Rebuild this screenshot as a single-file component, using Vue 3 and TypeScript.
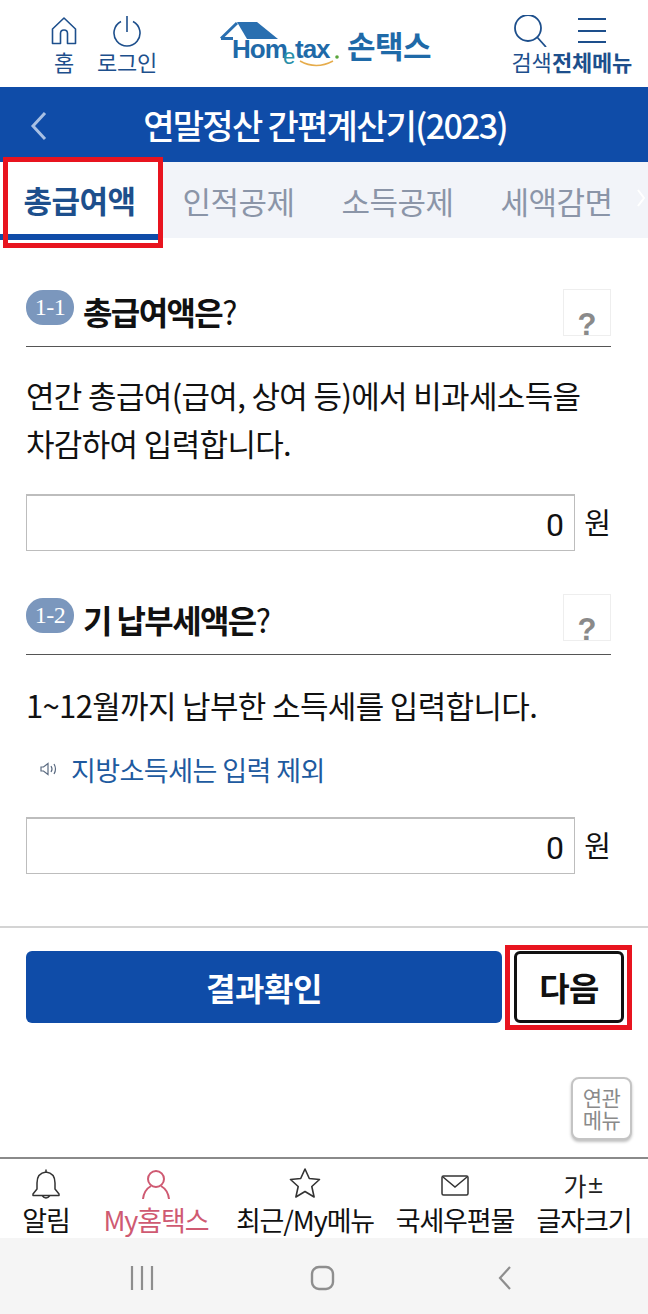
<script setup lang="ts">
interface NavItem {
  label: string;
  icon: string;
  active?: boolean;
}

const tabs = ['총급여액', '인적공제', '소득공제', '세액감면'];

const navItems: NavItem[] = [
  { label: '알림', icon: 'bell' },
  { label: 'My홈택스', icon: 'user', active: true },
  { label: '최근/My메뉴', icon: 'star' },
  { label: '국세우편물', icon: 'mail' },
  { label: '글자크기', icon: 'font' },
];
</script>

<template>
  <div class="page">
    <header class="top">
      <div class="top-group">
        <div class="top-btn home">
          <svg width="26" height="30" viewBox="0 0 26 30" fill="none" stroke="#1d4f8c" stroke-width="1.6">
            <path d="M1.500 13 13 2l11.500 11v14.500H16.500V17.500q0-3.500-3.500-3.500t-3.500 3.500V27.500H1.500z" stroke-linejoin="round" />
          </svg>
          <span>홈</span>
        </div>
        <div class="top-btn login">
          <svg width="28" height="30" viewBox="0 0 28 30" fill="none" stroke="#1d4f8c" stroke-width="1.6">
            <path d="M8 5.500a13 13 0 1 0 12 0" />
            <path d="M14 0v16" />
          </svg>
          <span>로그인</span>
        </div>
      </div>
      <div class="logo">
        <svg class="logo-mark" width="122" height="50" viewBox="0 0 122 50">
          <path d="M17 2h20l21 17H27z" fill="#2a6fb0" />
          <path d="M1 18.500 17 3M1 18.500h12" fill="none" stroke="#2a6fb0" stroke-width="3" />
          <text x="12" y="38" class="logo-word">Hom</text>
          <text x="63" y="44" class="logo-e">e</text>
          <text x="75" y="38" class="logo-word">tax</text>
          <circle cx="117" cy="37" r="1.800" fill="#5aa53c" />
          <path d="M80 41q16 9 33 0" fill="none" stroke="#e6ac4b" stroke-width="1.500" />
        </svg>
        <span class="logo-name">손택스</span>
      </div>
      <div class="top-group right">
        <div class="top-btn search">
          <svg width="36" height="32" viewBox="0 0 36 32" fill="none" stroke="#1d4f8c" stroke-width="1.800">
            <circle cx="14" cy="13" r="13" />
            <path d="M23 22l9 10" />
          </svg>
          <span>검색</span>
        </div>
        <div class="top-btn menu">
          <svg width="30" height="32" viewBox="0 0 30 32" fill="none" stroke="#1d4f8c" stroke-width="2">
            <path d="M1 4h28M1 16h28M1 27h28" />
          </svg>
          <span>전체메뉴</span>
        </div>
      </div>
    </header>

    <div class="title-bar">
      <svg class="back" width="18" height="30" viewBox="0 0 18 30" fill="none" stroke="#a8c0e4" stroke-width="3">
        <path d="M15 2 3 15l12 13" />
      </svg>
      <h1>연말정산 간편계산기(2023)</h1>
    </div>

    <nav class="tabs">
      <div v-for="(tab, i) in tabs" :key="tab" class="tab" :class="{ on: i === 0 }">{{ tab }}</div>
      <svg class="tab-more" width="10" height="20" viewBox="0 0 10 20" fill="none" stroke="#fff" stroke-width="2">
        <path d="M2 2l6 8-6 8" />
      </svg>
      <div class="mark mark-tab"></div>
    </nav>

    <main class="content">
      <section class="sec first">
        <div class="sec-head">
          <span class="badge">1-1</span>
          <h2>총급여액은<i>?</i></h2>
          <span class="help">?</span>
        </div>
        <p class="desc two">연간 총급여(급여, 상여 등)에서 비과세소득을<br />차감하여 입력합니다.</p>
        <div class="field">
          <div class="input">0</div>
          <span class="unit">원</span>
        </div>
      </section>

      <section class="sec second">
        <div class="sec-head">
          <span class="badge">1-2</span>
          <h2>기 납부세액은<i>?</i></h2>
          <span class="help">?</span>
        </div>
        <p class="desc one">1~12월까지 납부한 소득세를 입력합니다.</p>
        <p class="note">
          <svg width="20" height="16" viewBox="0 0 20 16" fill="none" stroke="#5a6a80" stroke-width="1.200">
            <path d="M1 6h2.500L8 2.500v11L3.500 10H1z" />
            <path d="M11 5q2 3 0 6M14 3q3 5 0 10" />
          </svg>
          지방소득세는 입력 제외
        </p>
        <div class="field">
          <div class="input">0</div>
          <span class="unit">원</span>
        </div>
      </section>
    </main>

    <div class="actions">
      <button class="btn-result" type="button">결과확인</button>
      <div class="next-wrap">
        <button class="btn-next" type="button">다음</button>
        <div class="mark mark-next"></div>
      </div>
    </div>

    <div class="related-row">
      <div class="related">연관<br />메뉴</div>
    </div>

    <nav class="bottom">
      <div v-for="item in navItems" :key="item.label" class="nav-item" :class="[item.icon, { active: item.active }]">
        <div class="nav-icon">
          <svg v-if="item.icon === 'bell'" width="30" height="34" viewBox="0 0 30 34" fill="none" stroke="#333" stroke-width="1.500">
            <path d="M15 4q-9 1-9 11v6l-4 5v1.500h26V26l-4-5v-6q0-10-9-11zM15 4V1.500M11 27.500q4 5 8 0" stroke-linejoin="round" />
          </svg>
          <svg v-else-if="item.icon === 'user'" width="30" height="34" viewBox="0 0 30 34" fill="none" stroke="#cf5a72" stroke-width="2">
            <circle cx="15" cy="11" r="8" />
            <path d="M10 18Q3 22 2 31M20 18q7 4 8 13" />
          </svg>
          <svg v-else-if="item.icon === 'star'" width="32" height="34" viewBox="0 3 32 34" fill="none" stroke="#333" stroke-width="1.600">
            <path d="M16 4l4.300 9.500 10.200 1-7.700 7 2.300 10.500L16 26.500 6.900 32l2.300-10.500-7.700-7 10.200-1z" stroke-linejoin="round" />
          </svg>
          <svg v-else-if="item.icon === 'mail'" width="30" height="34" viewBox="0 0 30 34" fill="none" stroke="#333" stroke-width="1.500">
            <rect x="2" y="8" width="26" height="19" rx="1.500" />
            <path d="M3 9l12 10L27 9" />
          </svg>
          <span v-else class="font-icon">가<b>±</b></span>
        </div>
        <span class="nav-label">{{ item.label }}</span>
      </div>
    </nav>

    <div class="sys-bar">
      <svg width="24" height="26" viewBox="0 0 24 26" fill="none" stroke="#8e8e8e" stroke-width="2.200">
        <path d="M2 1v24M12 1v24M22 1v24" />
      </svg>
      <svg width="26" height="26" viewBox="0 0 26 26" fill="none" stroke="#8e8e8e" stroke-width="2.400">
        <rect x="2" y="2" width="21" height="22" rx="7" />
      </svg>
      <svg width="14" height="26" viewBox="0 0 14 26" fill="none" stroke="#8e8e8e" stroke-width="2.200">
        <path d="M12 2 2 13l10 11" />
      </svg>
    </div>
  </div>
</template>

<style scoped>
.page {
  position: relative;
  width: 648px;
  height: 1314px;
  overflow: hidden;
  background: #fff;
  color: #111;
  font-family: "Noto Sans CJK KR", "Liberation Sans", sans-serif;
}

.top {
  height: 87px;
  display: flex;
  align-items: flex-start;
  padding: 15px 16px 0 49px;
  box-sizing: border-box;
}

.top-group {
  display: flex;
}

.top-group.right {
  margin-left: auto;
}

.top-btn {
  display: flex;
  flex-direction: column;
  align-items: center;
  color: #1d4f8c;
  font-size: 22px;
  line-height: 28px;
  letter-spacing: -0.300px;
  white-space: nowrap;
}

.top-btn svg {
  display: block;
  height: 32px;
}

.home {
  width: 30px;
}

.login {
  width: 64px;
  margin-left: 16px;
}

.search {
  width: 41px;
}

.menu {
  width: 80px;
}

.search span,
.menu span {
  font-size: 22px;
  letter-spacing: -0.300px;
}

.menu span {
  font-weight: 700;
}

.logo {
  display: flex;
  align-items: flex-start;
  margin: 5px 0 0 61px;
}

.logo-mark {
  flex: none;
}

.logo-word {
  font-family: "Liberation Sans", sans-serif;
  font-size: 26px;
  font-weight: 700;
  fill: #1f6aa8;
  letter-spacing: -1px;
}

.logo-e {
  font-family: "Liberation Sans", sans-serif;
  font-size: 22px;
  fill: #2a8fa8;
}

.logo-name {
  font-size: 31px;
  line-height: 40px;
  font-weight: 700;
  color: #1f6aa8;
  letter-spacing: -0.500px;
  margin: 5px 0 0 5px;
}

.title-bar {
  position: relative;
  height: 75px;
  background: #0f4ca8;
  display: flex;
  align-items: center;
  justify-content: center;
  padding-left: 2px;
}

.back {
  position: absolute;
  left: 30px;
  top: 24px;
}

.title-bar h1 {
  margin: 0;
  color: #fff;
  font-size: 34px;
  font-weight: 500;
  letter-spacing: -1.700px;
}

.tabs {
  position: relative;
  height: 76px;
  background: #f2f4f9;
  display: flex;
  align-items: flex-start;
  box-sizing: border-box;
}

.tab {
  width: 159px;
  height: 76px;
  flex: none;
  display: flex;
  align-items: center;
  justify-content: center;
  font-size: 31px;
  letter-spacing: -0.500px;
  color: #8b95a8;
  box-sizing: border-box;
}

.tab.on {
  height: 78px;
  padding-top: 2px;
  background: #fff;
  color: #1d4f8c;
  font-weight: 700;
  border-bottom: 6px solid #0f4ca8;
}

.tab-more {
  position: absolute;
  right: 2px;
  top: 26px;
}

.mark {
  position: absolute;
  border: 5px solid #e8141f;
  box-sizing: border-box;
  pointer-events: none;
}

.mark-tab {
  left: 3px;
  top: -5px;
  width: 160px;
  height: 91px;
}

.content {
  padding: 0 37px 0 26px;
}

.sec.first {
  padding-top: 47px;
}

.sec.second {
  padding-top: 42px;
}

.sec-head {
  position: relative;
  height: 62px;
  box-sizing: border-box;
  border-bottom: 1px solid #555;
  display: flex;
  align-items: flex-start;
}

.badge {
  flex: none;
  width: 48px;
  height: 35px;
  margin-top: 5px;
  border-radius: 17px;
  background: #7b97bd;
  color: #fff;
  font-family: "Liberation Serif", serif;
  font-size: 24px;
  line-height: 34px;
  text-align: center;
  letter-spacing: -0.500px;
}

.sec-head h2 {
  margin: 4px 0 0 9px;
  font-size: 32px;
  line-height: 44px;
  font-weight: 700;
  letter-spacing: -1.600px;
}

.sec-head h2 i {
  font-style: normal;
  font-weight: 400;
}

.help {
  position: absolute;
  right: 0;
  top: 4px;
  width: 48px;
  height: 47px;
  box-sizing: border-box;
  border: 1px solid #eee;
  padding-top: 18px;
  text-align: center;
  font-family: "Liberation Sans", sans-serif;
  color: #8a8a8a;
  font-size: 31px;
  font-weight: 700;
  line-height: 34px;
}

.second .help {
  top: 1px;
}

.desc {
  margin: 0;
  font-size: 31px;
  letter-spacing: -0.650px;
  white-space: nowrap;
}

.desc.two {
  line-height: 48px;
  padding-top: 24px;
  padding-bottom: 27px;
}

.desc.one {
  line-height: 50px;
  padding-top: 25px;
}

.note {
  margin: 14px 0 23px 14px;
  height: 50px;
  display: flex;
  align-items: center;
  gap: 11px;
  color: #205a9f;
  font-size: 27px;
  letter-spacing: -0.550px;
}

.field {
  display: flex;
  align-items: center;
  justify-content: space-between;
}

.input {
  flex: none;
  width: 549px;
  height: 57px;
  box-sizing: border-box;
  border: 1px solid #bdbdbd;
  border-top-width: 2px;
  text-align: right;
  padding-right: 10px;
  font-size: 32px;
  line-height: 58px;
  font-family: Roboto, "Liberation Sans", sans-serif;
}

.unit {
  font-size: 29px;
  line-height: 57px;
  margin-top: -3px;
}

.actions {
  margin-top: 52px;
  border-top: 2px solid #d4d4d4;
  padding: 23px 24px 0 26px;
  display: flex;
  gap: 12px;
  height: 72px;
}

.btn-result {
  width: 476px;
  height: 72px;
  border: none;
  border-radius: 6px;
  background: #0f4ca8;
  color: #fff;
  font-family: inherit;
  font-size: 32px;
  font-weight: 700;
  letter-spacing: -0.500px;
}

.next-wrap {
  position: relative;
}

.btn-next {
  width: 110px;
  height: 72px;
  border: 3px solid #111;
  border-radius: 6px;
  background: #fff;
  color: #111;
  font-family: inherit;
  font-size: 33px;
  font-weight: 700;
  letter-spacing: -0.500px;
}

.mark-next {
  left: -9px;
  top: -6px;
  width: 127px;
  height: 85px;
}

.related-row {
  display: flex;
  justify-content: flex-end;
  padding-right: 16px;
  margin-top: 54px;
}

.related {
  width: 61px;
  height: 63px;
  box-sizing: border-box;
  border: 2px solid #c4c4c4;
  border-radius: 8px;
  box-shadow: 0 2px 3px rgba(0, 0, 0, 0.25);
  background: #fff;
  color: #8a8a8a;
  font-size: 21px;
  line-height: 22px;
  text-align: center;
  padding-top: 7px;
  letter-spacing: -0.500px;
}

.bottom {
  position: absolute;
  left: 0;
  right: 0;
  top: 1157px;
  height: 81px;
  box-sizing: border-box;
  border-top: 2px solid #8a8a8a;
  display: grid;
  grid-template-columns: 92px 128px 170px 130px 128px;
}

.nav-item {
  display: flex;
  flex-direction: column;
  align-items: center;
}

.nav-icon {
  height: 40px;
  margin-top: 6px;
  display: flex;
  align-items: center;
  justify-content: center;
}

.font-icon {
  font-size: 25px;
  line-height: 34px;
  color: #222;
}

.font-icon b {
  font-size: 18px;
  font-weight: 700;
  vertical-align: 3px;
}

.nav-label {
  font-size: 27px;
  line-height: 30px;
  letter-spacing: -1.100px;
  white-space: nowrap;
}

.nav-item.active .nav-label {
  color: #cf5a72;
}

.sys-bar {
  position: absolute;
  left: 0;
  right: 0;
  top: 1238px;
  height: 76px;
  background: #f5f5f5;
  display: grid;
  grid-template-columns: 180px 188px 1fr;
  align-items: center;
  padding: 4px 0 0 130px;
  box-sizing: border-box;
}
</style>

<style>
body {
  margin: 0;
}
</style>
